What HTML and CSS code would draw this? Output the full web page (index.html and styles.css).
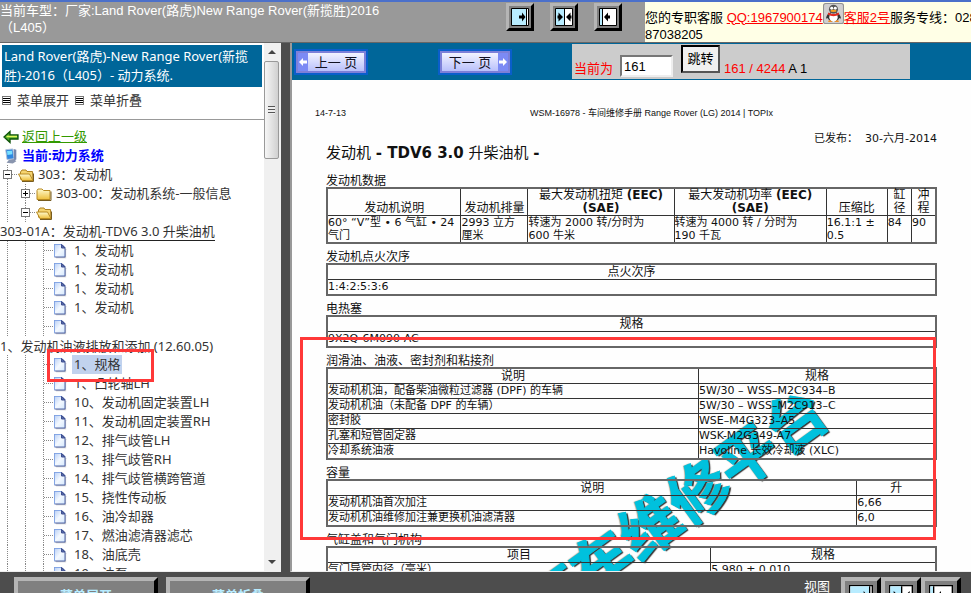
FILE: index.html
```html
<!DOCTYPE html>
<html lang="zh-CN">
<head>
<meta charset="utf-8">
<title>动力系统</title>
<link rel="stylesheet" href="styles.css">
</head>
<body>
<svg class="defs" aria-hidden="true">
  <defs>
    <linearGradient id="gold" x1="0" y1="0" x2="0" y2="1"><stop offset="0" stop-color="#fffbd0"/><stop offset="1" stop-color="#eebf3c"/></linearGradient>
    <linearGradient id="sheet" x1="0" y1="0" x2="1" y2="1"><stop offset="0" stop-color="#b9cff5"/><stop offset=".5" stop-color="#f4f9ff"/><stop offset="1" stop-color="#d5e8fd"/></linearGradient>
    <symbol id="page" viewBox="0 0 14 16"><path d="M2.500 2.500h7l3 3v9h-10z" transform="translate(.6 .8)" fill="#9999a5" opacity=".6"/><path d="M1.500 1.500h7.500l3 3v9.500h-10.500z" fill="url(#sheet)" stroke="#5167a8"/><path d="M1.500 14v-12.500h7" fill="none" stroke="#85a7e6"/><path d="M8.500 1.500v3.500h3.500z" fill="#5269ae" stroke="#40508f"/></symbol>
    <symbol id="closed" viewBox="0 0 16 16"><path d="M1 4.500l1-1.500h4l1.500 1.500h6.500v9h-13z" fill="url(#gold)" stroke="#b88a20"/><path d="M2 14.500h13v-9" fill="none" stroke="#775c20"/></symbol>
    <symbol id="open" viewBox="0 0 16 16"><path d="M2.500 12v-7l1.500-2h4l1 1.500h5.500l.5 9h-11z" fill="#f5d470" stroke="#ad8122"/><path d="M.5 7h11l3.500 6.500h-11z" fill="url(#gold)" stroke="#b88a20"/><path d="M4 14.500h11.500v-8" fill="none" stroke="#775c20"/></symbol>
    <symbol id="back" viewBox="0 0 16 14"><path d="M1 7l6-5.500v3.500h8v4h-8v3.500z" fill="#4ba82a" stroke="#0d5208" stroke-width="1.300"/><path d="M3.500 6.500h10.500" stroke="#dff75c" stroke-width="1.600"/></symbol>
    <symbol id="computer" viewBox="0 0 14 18"><path d="M5 13l5-1 3 3-4 2.500-7-1z" fill="#8995ae"/><path d="M1 2l8-1 1.500 11-8 1z" fill="#2e86df" stroke="#b5c1d8"/><path d="M2.500 3.500l5.500-.5.5 4-5.500 1z" fill="#77e0ff"/><path d="M10 1l3 1v11l-2.500 1z" fill="#7687ac"/></symbol>
    <symbol id="pane-left" viewBox="0 0 18 18"><path d="M.5.500h17v17h-17z" fill="#fff" stroke="#000"/><path d="M1 1h14v16h-14z" fill="#b8ecff"/><path d="M15.500 1v16" stroke="#000"/><path d="M8 7.500h3v-3l3.500 4.500-3.500 4.500v-3h-3z"/></symbol>
    <symbol id="pane-both" viewBox="0 0 18 18"><path d="M.5.500h17v17h-17z" fill="#fff" stroke="#000"/><path d="M1 1h8v16h-8z" fill="#b8ecff"/><path d="M9.500 1v16" stroke="#000"/><path d="M2.500 7.500h1v-3l4.500 4.500-4.500 4.500v-3h-1zM16.500 7.500h-1v-3l-4.500 4.500 4.500 4.500v-3h1z"/></symbol>
    <symbol id="pane-right" viewBox="0 0 18 18"><path d="M.5.500h17v17h-17z" fill="#fff" stroke="#000"/><path d="M1 1h2v16h-2z" fill="#b8ecff"/><path d="M3.500 1v16" stroke="#000"/><path d="M11 7.500h-2v-3l-4 4.500 4 4.500v-3h2z"/></symbol>
  </defs>
</svg>

<header class="top">
  <p class="car">当前车型：厂家:Land Rover(路虎)New Range Rover(新揽胜)2016<br>（L405）</p>
  <div class="views">
    <button class="bevel" aria-label="左侧"><svg><use href="#pane-left"/></svg></button>
    <button class="bevel" aria-label="两侧"><svg><use href="#pane-both"/></svg></button>
    <button class="bevel" aria-label="右侧"><svg><use href="#pane-right"/></svg></button>
  </div>
  <div class="service">
    <div class="line">您的专职客服&nbsp; <a href="#">QQ:1967900174</a><svg class="qq" viewBox="0 0 20 20"><rect x=".5" y=".5" width="19" height="19" rx="2" fill="#d0d0d0" stroke="#929292"/><path d="M5 10q-3 4-1.500 5l3-2M15 10q3 4 1.500 5l-3-2" fill="#333"/><ellipse cx="10" cy="13" rx="5.500" ry="5" fill="#333"/><ellipse cx="10" cy="13.500" rx="4" ry="4.500" fill="#fff"/><circle cx="10" cy="6" r="4.300" fill="#555"/><circle cx="8.300" cy="5" r="1.400" fill="#fff"/><circle cx="11.700" cy="5" r="1.400" fill="#fff"/><ellipse cx="10" cy="7.500" rx="3" ry="1" fill="#f5a020"/><path d="M5 9q5 3 10 0l.5 2q-5.500 3-11 0z" fill="#e22b20"/><path d="M5 17q2-1.500 4 1h-4zM15 17q-2-1.500-4 1h4z" fill="#f29020"/></svg><a href="#">客服2号</a>服务专线：028-</div>
    <div class="line second">87038205</div>
  </div>
</header>

<main class="work">
  <aside class="side">
    <div class="side-body">
      <h1 class="title">Land Rover(路虎)-New Range Rover(新揽<br>胜)-2016（L405）- 动力系统.</h1>
      <div class="fold"><i class="lines"></i><span>菜单展开</span><i class="lines"></i><span>菜单折叠</span></div>
      <nav class="tree">
        <div class="row head"><svg class="ico"><use href="#back"/></svg><a class="up" href="#">返回上一级</a></div>
        <div class="row head"><svg class="ico pc"><use href="#computer"/></svg><b class="current">当前:动力系统</b></div>
        <div class="row"><i class="g box minus"></i><svg class="ico"><use href="#open"/></svg><span>303：发动机</span></div>
        <div class="row"><i class="g"></i><i class="g box plus"></i><svg class="ico"><use href="#closed"/></svg><span>303-00：发动机系统-一般信息</span></div>
        <div class="row"><i class="g"></i><i class="g box minus"></i><svg class="ico"><use href="#open"/></svg></div>
        <div class="row"><span class="wrapped line-under">303-01A：发动机-TDV6 3.0 升柴油机</span></div>
        <div class="row"><i class="g"></i><i class="g"></i><i class="g join"></i><svg class="ico"><use href="#page"/></svg><span>1、发动机</span></div>
        <div class="row"><i class="g"></i><i class="g"></i><i class="g join"></i><svg class="ico"><use href="#page"/></svg><span>1、发动机</span></div>
        <div class="row"><i class="g"></i><i class="g"></i><i class="g join"></i><svg class="ico"><use href="#page"/></svg><span>1、发动机</span></div>
        <div class="row"><i class="g"></i><i class="g"></i><i class="g join"></i><svg class="ico"><use href="#page"/></svg><span>1、发动机</span></div>
        <div class="row"><i class="g"></i><i class="g"></i><i class="g join"></i><svg class="ico"><use href="#page"/></svg></div>
        <div class="row"><span class="wrapped">1、发动机油液排放和添加 (12.60.05)</span></div>
        <div class="row marked"><i class="g"></i><i class="g"></i><i class="g join"></i><svg class="ico"><use href="#page"/></svg><span class="chosen">1、规格</span></div>
        <div class="row"><i class="g"></i><i class="g"></i><i class="g join"></i><svg class="ico"><use href="#page"/></svg><span>1、凸轮轴LH</span></div>
        <div class="row"><i class="g"></i><i class="g"></i><i class="g join"></i><svg class="ico"><use href="#page"/></svg><span>10、发动机固定装置LH</span></div>
        <div class="row"><i class="g"></i><i class="g"></i><i class="g join"></i><svg class="ico"><use href="#page"/></svg><span>11、发动机固定装置RH</span></div>
        <div class="row"><i class="g"></i><i class="g"></i><i class="g join"></i><svg class="ico"><use href="#page"/></svg><span>12、排气歧管LH</span></div>
        <div class="row"><i class="g"></i><i class="g"></i><i class="g join"></i><svg class="ico"><use href="#page"/></svg><span>13、排气歧管RH</span></div>
        <div class="row"><i class="g"></i><i class="g"></i><i class="g join"></i><svg class="ico"><use href="#page"/></svg><span>14、排气歧管横跨管道</span></div>
        <div class="row"><i class="g"></i><i class="g"></i><i class="g join"></i><svg class="ico"><use href="#page"/></svg><span>15、挠性传动板</span></div>
        <div class="row"><i class="g"></i><i class="g"></i><i class="g join"></i><svg class="ico"><use href="#page"/></svg><span>16、油冷却器</span></div>
        <div class="row"><i class="g"></i><i class="g"></i><i class="g join"></i><svg class="ico"><use href="#page"/></svg><span>17、燃油滤清器滤芯</span></div>
        <div class="row"><i class="g"></i><i class="g"></i><i class="g join"></i><svg class="ico"><use href="#page"/></svg><span>18、油底壳</span></div>
        <div class="row"><i class="g"></i><i class="g"></i><i class="g join"></i><svg class="ico"><use href="#page"/></svg><span>19、油泵</span></div>
      </nav>
    </div>
    <div class="scroll"><i class="arrow up-arrow"></i><div class="thumb"><i class="grip"></i></div><i class="arrow down-arrow"></i></div>
  </aside>

  <section class="reader">
    <div class="toolbar">
      <div class="pager">
        <button class="turn prev"><i><svg viewBox="0 0 8 8"><path d="M0 4l4-4v2.500h4v3h-4v2.500z" fill="#fff"/></svg></i><span>上一 页</span></button>
        <button class="turn next"><span>下一 页</span><i><svg viewBox="0 0 8 8"><path d="M8 4l-4-4v2.500h-4v3h4v2.500z" fill="#fff"/></svg></i></button>
      </div>
      <form class="jump">
        <label for="pg">当前为</label>
        <input id="pg" type="text" value="161">
        <button type="button">跳转</button>
        <span class="count"><em>161 / 4244</em> A 1</span>
      </form>
    </div>
    <article class="doc">
      <div class="running"><span>14-7-13</span><span>WSM-16978 - 车间维修手册 Range Rover (LG) 2014 | TOPIx</span></div>
      <div class="issued">已发布： &nbsp;<b>30-</b>六月<b>-2014</b></div>
      <h2>发动机 <b>- TDV6 3.0</b> 升柴油机 <b>-</b></h2>
      <table class="engine">
        <caption>发动机数据</caption>
        <colgroup><col class="w22"><col class="w11"><col class="w24"><col class="w25"><col class="w10"><col class="w4"><col class="w4"></colgroup>
        <tr><th>发动机说明</th><th>发动机排量</th><th>最大发动机扭矩 <b>(EEC)<br>(SAE)</b></th><th>最大发动机功率 <b>(EEC)<br>(SAE)</b></th><th>压缩比</th><th>缸<br>径</th><th>冲<br>程</th></tr>
        <tr><td>60° “V”型 • 6 气缸 • 24<br>气门</td><td>2993 立方<br>厘米</td><td>转速为 2000 转/分时为<br>600 牛米</td><td>转速为 4000 转 / 分时为<br>190 千瓦</td><td>16.1:1 ±<br>0.5</td><td>84</td><td>90</td></tr>
      </table>
      <table>
        <caption>发动机点火次序</caption>
        <tr><th>点火次序</th></tr>
        <tr><td>1:4:2:5:3:6</td></tr>
      </table>
      <table>
        <caption>电热塞</caption>
        <tr><th>规格</th></tr>
        <tr><td>9X2Q-6M090-AC</td></tr>
      </table>
      <table>
        <caption>润滑油、油液、密封剂和粘接剂</caption>
        <colgroup><col class="w61"><col></colgroup>
        <tr><th>说明</th><th>规格</th></tr>
        <tr><td>发动机机油，配备柴油微粒过滤器 (DPF) 的车辆</td><td>5W/30 – WSS–M2C934–B</td></tr>
        <tr><td>发动机机油（未配备 DPF 的车辆）</td><td>5W/30 – WSS–M2C913–C</td></tr>
        <tr><td>密封胶</td><td>WSE–M4G323–A5</td></tr>
        <tr><td>孔塞和短管固定器</td><td>WSK-M2G349-A7</td></tr>
        <tr><td>冷却系统油液</td><td>Havoline 长效冷却液 (XLC)</td></tr>
      </table>
      <table>
        <caption>容量</caption>
        <colgroup><col class="w87"><col></colgroup>
        <tr><th>说明</th><th>升</th></tr>
        <tr><td>发动机机油首次加注</td><td>6,66</td></tr>
        <tr><td>发动机机油维修加注兼更换机油滤清器</td><td>6,0</td></tr>
      </table>
      <table>
        <caption>气缸盖和气门机构</caption>
        <colgroup><col class="w63"><col></colgroup>
        <tr><th>项目</th><th>规格</th></tr>
        <tr><td>气门导管内径（毫米）</td><td>5.980 ± 0.010</td></tr>
      </table>
      <div class="watermark">汽车维修平台</div>
      <div class="frame"></div>
    </article>
  </section>
</main>

<footer class="bottom">
  <button class="bevel wide">菜单展开</button>
  <button class="bevel wide">菜单折叠</button>
  <span class="view-label">视图</span>
  <button class="bevel big" aria-label="左侧"><svg><use href="#pane-left"/></svg></button>
  <button class="bevel big" aria-label="两侧"><svg><use href="#pane-both"/></svg></button>
  <button class="bevel big" aria-label="右侧"><svg><use href="#pane-right"/></svg></button>
</footer>
</body>
</html>
```
FILE: styles.css
```css
*, *::before, *::after { box-sizing: border-box; }
html, body { height: 100%; }
body {
  margin: 0;
  display: grid;
  grid-template-rows: 43px minmax(0, 1fr) 20px;
  overflow: hidden;
  background: #4d4d4d;
  color: #333;
  font: 13px/19px "Noto Sans", "Noto Sans CJK SC", sans-serif;
}
p, h1, h2 { margin: 0; font-weight: normal; }
button, input { font: inherit; margin: 0; border-radius: 0; }
svg { display: block; }
.defs { position: absolute; width: 0; height: 0; }

/* header */
.top {
  display: grid;
  grid-template-columns: minmax(0, 1fr) 139px 326px;
  border-top: 2px solid #4b70ca;
  border-bottom: 1px solid #666;
  background: #999;
  font-family: "Liberation Sans", "Noto Sans CJK SC", sans-serif;
  line-height: 17px;
  white-space: nowrap;
  overflow: hidden;
}
.car { color: #fff; }
.views { display: flex; gap: 16px; align-items: flex-start; padding-top: 1px; }
.bevel {
  padding: 2px;
  border: 3px solid;
  border-color: #b5b5b5 #000 #000 #b5b5b5;
  background: #808080;
}
.bevel svg { width: 18px; height: 18px; }
.service { background: #ffffe6; color: #000; overflow: hidden; }
.service .line { display: flex; height: 24px; align-items: center; padding-top: 6px; }
.service .second { height: 17px; padding: 0; }
.service a { color: #f00; }
.qq { width: 21px; height: 21px; flex: none; margin-bottom: 8px; }

/* work area */
.work { display: grid; grid-template-columns: 281px minmax(0, 1fr); column-gap: 9px; min-height: 0; padding-bottom: 1px; }
.side { display: grid; grid-template-columns: minmax(0, 1fr) 17px; background: #fff; overflow: hidden; border-bottom: 1px solid #eee; }
.side-body { overflow: hidden; white-space: nowrap; }
.title { margin: 2px 2px 0; padding: 2px 2px 2px; height: 42px; background: #069; color: #fff; font-size: 13px; line-height: 19px; }
.fold { display: flex; align-items: center; gap: 6px; height: 33px; padding: 0 2px 5px; border-bottom: 1px solid #999; }
.lines { width: 9px; height: 9px; border: 1px solid #777; background: repeating-linear-gradient(#fff 0 1px, #000 1px 2px); }
.tree { padding-top: 7px; }
.row { display: flex; align-items: center; height: 19px; position: relative; }
.row.head { padding-left: 3px; }
.ico { width: 16px; height: 16px; flex: none; margin-right: 4px; }
.row.head .ico { margin-right: 3px; }
.up { color: #390; }
.current { color: #00f; }
.wrapped { line-height: 18px; }
.line-under { border-bottom: 1px solid #222; }
.chosen { background: #c1d2ee; padding: 0 2px; margin-left: -2px; }
.g { position: relative; width: 18px; height: 19px; flex: none; background: repeating-linear-gradient(#888 0 1px, #fff 1px 2px) 7px 0 / 1px 100% no-repeat; }
.join::after, .box::after { content: ""; position: absolute; left: 8px; top: 9px; width: 9px; border-top: 1px dotted #888; }
.join { width: 16px; }
.join + .ico { margin-right: 6px; }
.box::before {
  content: "";
  position: absolute;
  z-index: 1;
  left: 3px;
  top: 5px;
  width: 9px;
  height: 9px;
  border: 1px solid #777;
  background: linear-gradient(#000, #000) center / 5px 1px no-repeat, #fff;
}
.plus::before { background: linear-gradient(#000, #000) center / 5px 1px no-repeat, linear-gradient(#000, #000) center / 1px 5px no-repeat, #fff; }
.marked::after { content: ""; position: absolute; z-index: 2; left: 47px; top: -6px; width: 107px; height: 33px; border: 3px solid #ff3838; }
.scroll { display: flex; flex-direction: column; align-items: center; background: #f0f0f0; padding: 7px 2px 7px 0; }
.arrow { border: 4px solid transparent; border-top: 0; border-bottom: 4px solid #444; }
.down-arrow { border-bottom: 0; border-top: 4px solid #444; margin-top: auto; }
.thumb { width: 15px; height: 98px; margin-top: 7px; border: 1px solid #999; border-radius: 2px; background: linear-gradient(90deg, #f6f6f6, #d0d0d0); display: grid; place-items: center; }
.grip { width: 7px; height: 8px; background: repeating-linear-gradient(#555 0 1px, #eee 1px 3px); }

/* reader */
.reader { display: grid; grid-template-rows: 37px minmax(0, 1fr); border-left: 2px solid #999; background: #fff; overflow: hidden; border-bottom: 1px solid #eee; }
.toolbar { display: grid; grid-template-columns: 280px minmax(0, 338px) auto; background: #069; padding-top: 1px; }
.pager { display: flex; justify-content: space-between; align-items: flex-start; padding: 5px 60px 0 2px; }
.turn { display: flex; align-items: stretch; width: 74px; height: 26px; padding: 2px; border: 2px solid #0a5ecb; background: #7d80d8; color: #112; font-size: 13px; line-height: 18px; }
.turn span { flex: 1; background: linear-gradient(#f2f3ff, #b9c0fb); }
.turn i { width: 10px; background: #7c8af4; display: grid; place-items: center; }
.turn svg { width: 8px; height: 8px; }
.jump { display: flex; background: #ccc; height: 35px; padding: 0 2px; align-items: flex-start; color: #000; font-family: "Liberation Sans", "Noto Sans CJK SC", sans-serif; white-space: nowrap; }
.jump label { color: #f00; margin: 15px 7px 0 0; }
.jump input { width: 53px; height: 22px; margin-top: 11px; padding: 0 2px; border: 2px solid; border-color: #777 #eee #eee #777; background: #fff; }
.jump button { width: 39px; height: 28px; margin: 1px 4px 0 8px; padding: 0 0 2px; border: 2px solid; border-color: #000 #555 #555 #000; background: #f0f0f0; }
.count { margin-top: 15px; }
.count em { color: #f00; font-style: normal; }

/* scanned page */
.doc { position: relative; overflow: hidden; padding: 26px 34px 0; color: #111; font: 12px/14px "DejaVu Sans", "Noto Sans CJK SC", sans-serif; white-space: nowrap; background: #fefefe; }
.running { display: flex; gap: 184px; margin-left: -11px; font: 9px/14px "Liberation Sans", "Noto Sans CJK SC", sans-serif; }
.issued { text-align: right; font-size: 11px; line-height: 14px; margin-top: 12px; }
.issued b { font-weight: normal; }
.doc h2 { font-size: 15px; line-height: 14px; margin-bottom: 16px; }
.doc table { position: relative; z-index: 1; width: 100%; table-layout: fixed; border-collapse: collapse; border: 2px solid #666; margin-bottom: 8px; }
.doc caption { text-align: left; height: 11px; line-height: 11px; font-size: 12px; }
.doc th, .doc td { height: 15px; padding: 0; border: 1px solid #333; line-height: 14px; }
.doc th { font-size: 12px; font-weight: normal; text-align: center; vertical-align: bottom; }
.doc td { font-size: 11px; text-align: left; vertical-align: top; }
.doc .engine th, .doc .engine td { line-height: 13px; }
.w22 { width: 22%; } .w11 { width: 11%; } .w24 { width: 24%; } .w25 { width: 25%; }
.w10 { width: 10%; } .w4 { width: 4%; } .w61 { width: 61%; } .w63 { width: 63%; } .w87 { width: 87%; }
.watermark {
  position: absolute;
  left: 200px;
  top: 396px;
  font: bold 60px/60px "Noto Sans CJK SC", sans-serif;
  color: #00c1dd;
  -webkit-text-stroke: 1px #00c1dd;
  text-shadow: 1px 2px 1px #333, -1px -1px 1px #aa9;
  transform: rotate(-36deg);
}
.frame { position: absolute; z-index: 2; left: 8px; top: 257px; right: 35px; height: 203px; border: 3px solid #ff3838; }

/* footer */
.bottom { display: flex; align-items: flex-start; padding: 4px 10px 0 14px; overflow: hidden; background: #4d4d4d; color: #fff; }
.wide { width: 144px; height: 36px; margin-right: 8px; border-width: 4px; color: #b8ecff; font: bold 13px/22px "Noto Sans CJK SC", sans-serif; flex: none; }
.view-label { margin: 0 11px 0 auto; }
.big { width: 40px; height: 40px; padding: 4px; border-width: 4px; flex: none; }
.big svg { width: 24px; height: 24px; }
```
